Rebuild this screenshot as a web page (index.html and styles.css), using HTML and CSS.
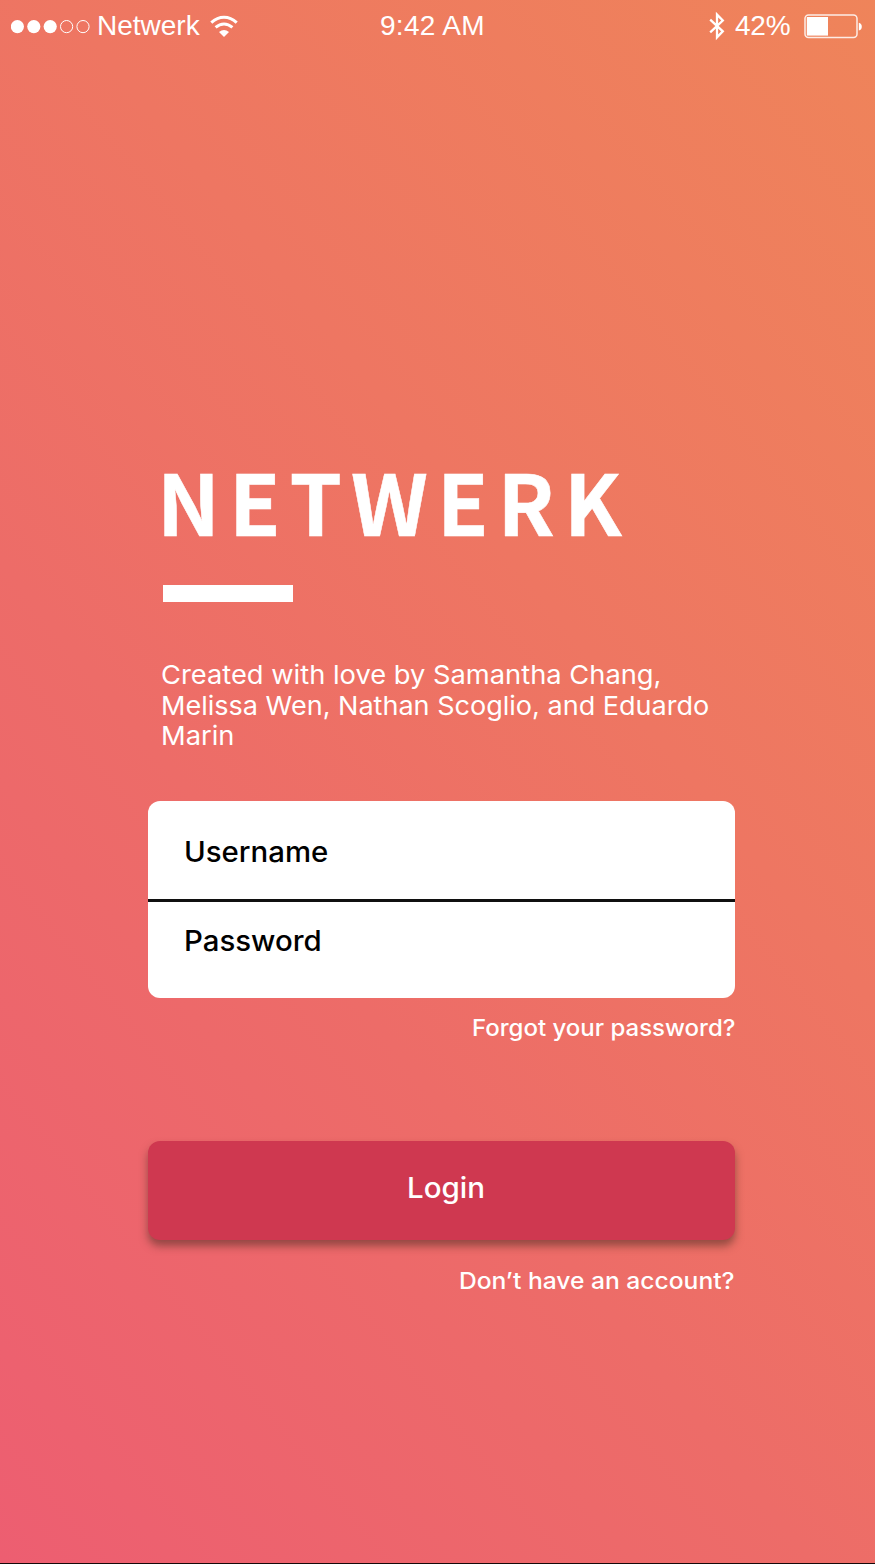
FILE: index.html
```html
<!DOCTYPE html>
<html lang="en">
<head>
<meta charset="utf-8">
<title>Netwerk</title>
<link rel="stylesheet" href="styles.css">
</head>
<body>
<div class="screen">
  <header class="status">
    <div class="status-left">
      <svg class="signal" width="80" height="14" viewBox="0 0 80 14" fill="#fff" stroke="#fff">
        <g stroke="none"><circle cx="6.4" cy="6.6" r="6.6"/><circle cx="22.8" cy="6.6" r="6.6"/><circle cx="39.2" cy="6.6" r="6.6"/></g>
        <g fill="none" stroke-width="1"><circle cx="55.6" cy="6.6" r="6.1"/><circle cx="72" cy="6.6" r="6.1"/></g>
      </svg>
      <span class="carrier">Netwerk</span>
      <svg class="wifi" width="28" height="22" viewBox="0 0 28 22" fill="none" stroke="#fff" stroke-width="3">
        <path d="M1.3 7.7Q7.2 2.2 14 2.2T26.7 7.7"/>
        <path d="M5.6 12.4Q9.6 8.9 14 8.9T22.4 12.4"/>
        <path d="M14 22L9 16.9Q14 13.2 19 16.9Z" fill="#fff" stroke="none"/>
      </svg>
    </div>
    <span class="time">9:42 AM</span>
    <div class="status-right">
      <svg class="bluetooth" width="16" height="30" viewBox="0 0 16 30" fill="none" stroke="#fff" stroke-width="2.3">
        <path d="M1.2 8.6L13.8 20.3L8 26.4V3.6L13.8 9.5L1.2 21.3"/>
      </svg>
      <span class="percent">42%</span>
      <svg class="battery" width="58" height="25" viewBox="0 0 58 25">
        <rect x="1" y="1" width="52" height="22.6" rx="3.5" fill="none" stroke="#fff" stroke-opacity=".85" stroke-width="1.5"/>
        <rect x="2.8" y="3" width="21.2" height="18.6" fill="#fff"/>
        <path d="M54.8 8.8Q57.8 9.7 57.8 12.7T54.8 16.5Z" fill="#fff"/>
      </svg>
    </div>
  </header>

  <main class="content">
    <h1 class="brand">NETWERK</h1>
    <div class="rule"></div>
    <p class="credits">
      <span class="line">Created with love by Samantha Chang,</span>
      <span class="line line-two">Melissa Wen, Nathan Scoglio, and Eduardo</span>
      <span class="line">Marin</span>
    </p>
    <form class="login">
      <div class="fields">
        <div class="field"><span class="label">Username</span></div>
        <div class="field field-last"><span class="label">Password</span></div>
      </div>
      <a class="link forgot">Forgot your password?</a>
      <button class="submit" type="button"><span class="submit-text">Login</span></button>
      <a class="link signup">Don’t have an account?</a>
    </form>
  </main>
</div>
</body>
</html>
```
FILE: styles.css
```css
* { box-sizing: border-box; }
body { margin: 0; }
.screen {
  width: 875px;
  height: 1564px;
  overflow: hidden;
  color: #fff;
  background: linear-gradient(51deg, #ed5e71 0%, #ed6c68 38%, #ee7662 62%, #ef845a 100%);
  border-bottom: 1px solid #16090a;
  font-family: Inter, "Open Sans", sans-serif;
}
.status {
  height: 52px;
  display: grid;
  grid-template-columns: 380px 105px 1fr;
  align-items: center;
  font: 28px/52px "Liberation Sans", Arial, sans-serif;
  white-space: nowrap;
}
.status-left, .status-right { display: flex; align-items: center; }
.status-left { padding-left: 11px; }
.signal { margin-top: 1px; }
.carrier { margin-left: 6px; width: 104px; }
.wifi { margin-left: 9px; }
.time { letter-spacing: .3px; }
.status-right { padding-left: 224px; }
.percent { margin-left: 10px; width: 58px; letter-spacing: -.2px; }
.battery { margin-left: 11px; margin-top: 1px; }
.content { padding: 398px 140px 0 148px; }
.brand {
  margin: 0 0 0 9px;
  height: 100px;
  font: 700 84px/100px "Noto Sans CJK JP", sans-serif;
  letter-spacing: 9px;
  -webkit-text-stroke: .5px #fff;
  white-space: nowrap;
}
.rule { width: 130px; height: 17px; margin: 35px 0 0 15px; background: #fff; }
.credits { margin: 58px 0 0 13px; font-size: 26px; line-height: 30.5px; }
.line { display: block; white-space: nowrap; transform: scaleX(1.05); transform-origin: left; }
.line-two { transform: scaleX(1.04); }
.login { display: flex; flex-direction: column; margin-top: 49.5px; width: 587px; }
.fields { height: 197px; border-radius: 12px; background: #fff; color: #000; }
.field { height: 101px; padding: 31px 0 0 36px; border-bottom: 3px solid #101010; font-size: 28px; line-height: 40px; }
.field-last { height: 96px; padding-top: 19px; border: 0; }
.label { display: inline-block; font-weight: 500; transform: scaleX(1.05); transform-origin: left; }
.link {
  align-self: flex-end;
  font-size: 23px;
  line-height: 30px;
  font-weight: 500;
  white-space: nowrap;
  transform: scaleX(1.044);
  transform-origin: right;
}
.forgot { margin-top: 15px; }
.submit {
  height: 99px;
  margin: 98px 0 0;
  padding: 0 0 5px 9px;
  border: 0;
  border-radius: 12px;
  background: #cf3850;
  color: #fff;
  font: 500 28px/40px Inter, sans-serif;
  box-shadow: 0 6px 9px rgba(75, 45, 35, .55);
}
.submit-text { display: inline-block; transform: scaleX(1.055); }
.signup { margin-top: 26px; transform: scaleX(1.07); }
```
